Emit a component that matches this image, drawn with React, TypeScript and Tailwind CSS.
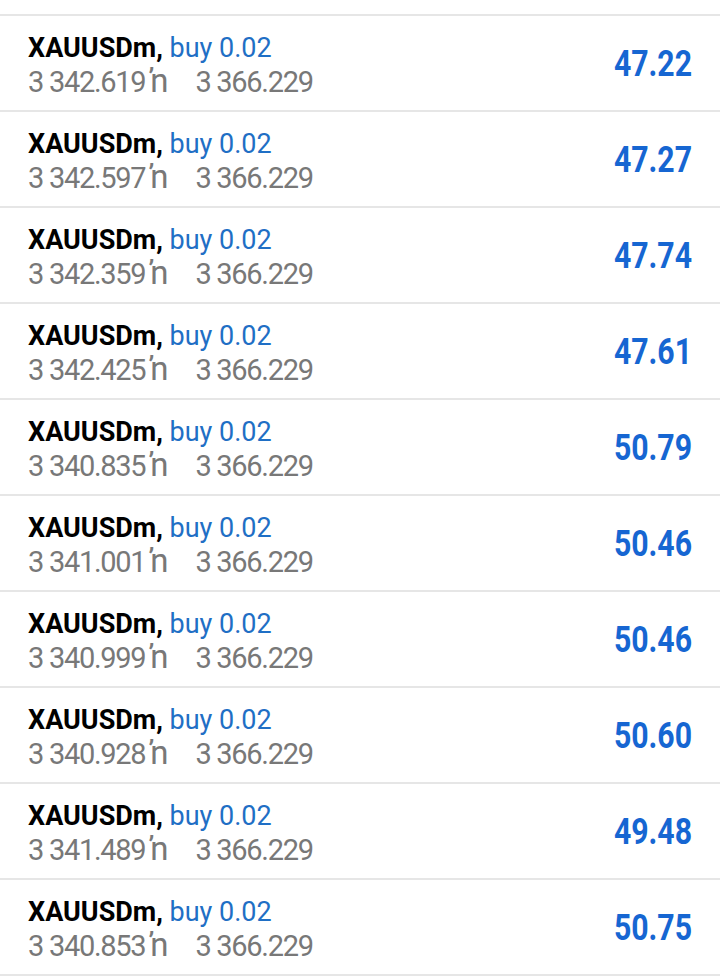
const trades = [
  { open: "3 342.619", profit: "47.22" },
  { open: "3 342.597", profit: "47.27" },
  { open: "3 342.359", profit: "47.74" },
  { open: "3 342.425", profit: "47.61" },
  { open: "3 340.835", profit: "50.79" },
  { open: "3 341.001", profit: "50.46" },
  { open: "3 340.999", profit: "50.46" },
  { open: "3 340.928", profit: "50.60" },
  { open: "3 341.489", profit: "49.48" },
  { open: "3 340.853", profit: "50.75" },
]

function TradeRow({ open, profit }: { open: string; profit: string }) {
  return (
    <div className="flex h-[96px] items-start justify-between border-t-2 border-[#e6e6e6] pl-[28px] pr-[28px]">
      <div className="flex flex-col pt-[16px]">
        <div className="text-[27px] leading-[32px]">
          <span className="font-bold text-black">XAUUSDm,</span>{" "}
          <span className="text-[#1f6fc5]">buy 0.02</span>
        </div>
        <div className="mt-[2px] flex h-[32px] items-baseline text-[29px] leading-[32px] tracking-[-1.3px] text-[#787878]">
          <span className="whitespace-pre">{open}</span>
          <span className="ml-[5px] text-[33px] leading-[29px] tracking-normal">ŉ</span>
          <span className="ml-[27px] whitespace-pre">3 366.229</span>
        </div>
      </div>
      <div className="origin-right scale-x-[0.84] pt-[26px] text-[36px] font-bold leading-[44px] text-[#1666d2]">
        {profit}
      </div>
    </div>
  )
}

export default function App() {
  return (
    <div className="min-h-screen w-[720px] bg-white pt-[14px] font-['Roboto',sans-serif]">
      <div className="border-b-2 border-[#e6e6e6]">
        {trades.map((t, i) => (
          <TradeRow key={i} open={t.open} profit={t.profit} />
        ))}
      </div>
    </div>
  )
}
